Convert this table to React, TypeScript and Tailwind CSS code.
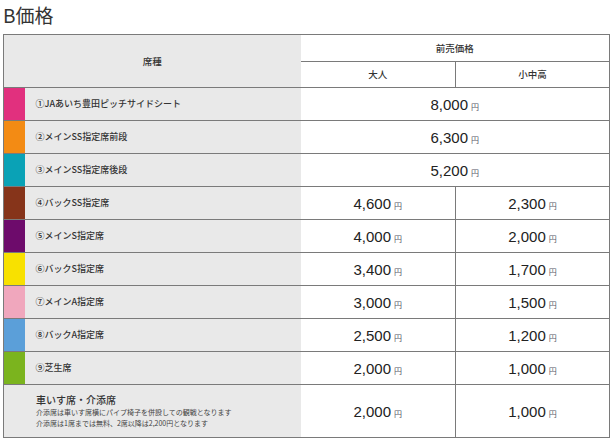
// B価格: seat price table
const rows: { color: string; name: string; adult: string; child?: string }[] = [
  { color: "bg-[#e1307e]", name: "①JAあいち豊田ピッチサイドシート", adult: "8,000" },
  { color: "bg-[#f38b14]", name: "②メインSS指定席前段", adult: "6,300" },
  { color: "bg-[#0aa2b6]", name: "③メインSS指定席後段", adult: "5,200" },
  { color: "bg-[#86341a]", name: "④バックSS指定席", adult: "4,600", child: "2,300" },
  { color: "bg-[#6d0b6b]", name: "⑤メインS指定席", adult: "4,000", child: "2,000" },
  { color: "bg-[#f8e100]", name: "⑥バックS指定席", adult: "3,400", child: "1,700" },
  { color: "bg-[#f0a7bd]", name: "⑦メインA指定席", adult: "3,000", child: "1,500" },
  { color: "bg-[#5b9fd9]", name: "⑧バックA指定席", adult: "2,500", child: "1,200" },
  { color: "bg-[#7bb41e]", name: "⑨芝生席", adult: "2,000", child: "1,000" },
];

function Price({ value }: { value: string }) {
  return (
    <span className="text-[#222]">
      <span className="text-[15px]" style={{ fontFamily: '"Liberation Sans", sans-serif' }}>{value}</span>
      <span className="ml-[3px] text-[8px] text-[#556]">円</span>
    </span>
  );
}

export default function App() {
  return (
    <div
      className="w-[612px] h-[443px] bg-white text-[#333] overflow-hidden"
      style={{ fontFamily: '"Noto Sans CJK JP", "Liberation Sans", sans-serif' }}
    >
      <h2 className="h-[34px] pl-[3px] pt-[1px] text-[19px] leading-[28px] text-[#333]">B価格</h2>

      <table className="ml-[3px] w-[606px] border-collapse table-fixed border border-[#7a7a7a]">
        <colgroup>
          <col className="w-[21px]" />
          <col className="w-[276px]" />
          <col className="w-[155px]" />
          <col className="w-[154px]" />
        </colgroup>
        <thead>
          <tr className="h-[27px]">
            <th colSpan={2} rowSpan={2} className="bg-[#e9e9e9] text-[9.5px] font-medium border-b border-[#7a7a7a]">
              席種
            </th>
            <th colSpan={2} className="text-[9.5px] font-medium border-b border-[#7a7a7a]">前売価格</th>
          </tr>
          <tr className="h-[26px]">
            <th className="text-[9.5px] font-medium border-b border-r border-[#7a7a7a]">大人</th>
            <th className="text-[9.5px] font-medium border-b border-[#7a7a7a]">小中高</th>
          </tr>
        </thead>
        <tbody>
          {rows.map((r) => (
            <tr key={r.name} className="h-[33px] border-b border-[#7a7a7a]">
              <td className={r.color}></td>
              <td className="bg-[#e9e9e9] pl-[11px] text-[9px] font-medium text-[#333]">{r.name}</td>
              {r.child ? (
                <>
                  <td className="text-center border-r border-[#7a7a7a]"><Price value={r.adult} /></td>
                  <td className="text-center"><Price value={r.child} /></td>
                </>
              ) : (
                <td colSpan={2} className="text-center"><Price value={r.adult} /></td>
              )}
            </tr>
          ))}
          <tr className="h-[53px]">
            <td colSpan={2} className="bg-[#e9e9e9] pl-[32px] align-middle">
              <div className="text-[10px] leading-[14px] font-medium text-[#333]">車いす席・介添席</div>
              <div className="text-[7px] leading-[11px] text-[#444]">介添席は車いす席横にパイプ椅子を併設しての観戦となります</div>
              <div className="text-[7px] leading-[11px] text-[#444]">介添席は1席までは無料、2席以降は2,200円となります</div>
            </td>
            <td className="text-center border-r border-[#7a7a7a]"><Price value="2,000" /></td>
            <td className="text-center"><Price value="1,000" /></td>
          </tr>
        </tbody>
      </table>
    </div>
  );
}
